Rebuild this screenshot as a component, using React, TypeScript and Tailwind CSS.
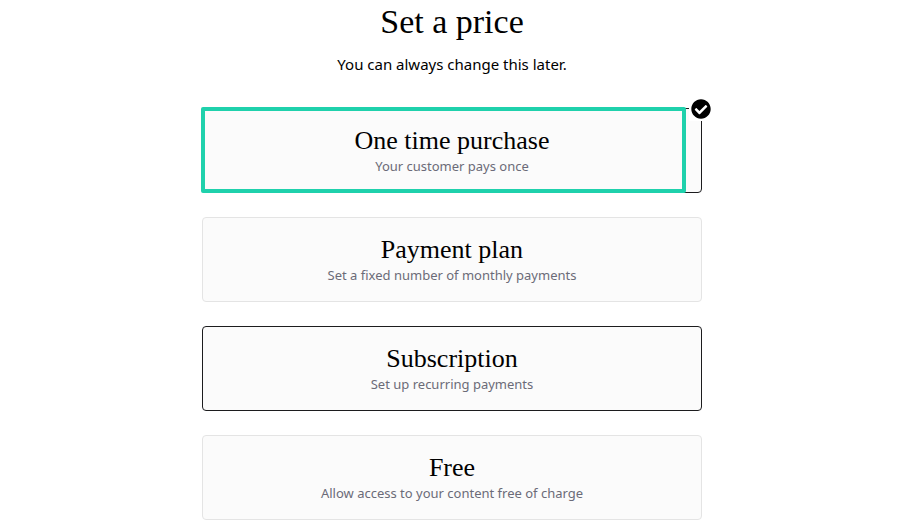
import { useState } from "react";
import { FaCheckCircle } from "react-icons/fa";

const options = [
  { id: "once", title: "One time purchase", description: "Your customer pays once" },
  { id: "plan", title: "Payment plan", description: "Set a fixed number of monthly payments" },
  { id: "subscription", title: "Subscription", description: "Set up recurring payments" },
  { id: "free", title: "Free", description: "Allow access to your content free of charge" },
];

export default function App() {
  const [selected, setSelected] = useState("once");
  const [active, setActive] = useState("subscription");

  return (
    <main className="flex flex-col items-center bg-white pr-1.5 font-['Noto_Sans',sans-serif] text-black">
      <h1 className="mt-1 font-['Liberation_Serif',serif] text-[34px] leading-9">Set a price</h1>
      <p className="mt-3 text-[15px] leading-6">You can always change this later.</p>

      <div className="mt-8 flex w-full max-w-[500px] flex-col gap-6">
        {options.map((option) => (
          <button
            key={option.id}
            type="button"
            aria-pressed={selected === option.id}
            onClick={() => {
              setSelected(option.id);
              setActive(option.id);
            }}
            className={`relative flex w-full flex-col items-center rounded border bg-[#fbfbfb] pt-[18px] pb-[15px] ${
              selected === option.id || active === option.id ? "border-[#1c1c1e]" : "border-[#e4e4e4]"
            }`}
          >
            <span className="font-['Liberation_Serif',serif] text-[26px] leading-7">{option.title}</span>
            <span className="text-[13px] leading-[22px] text-[#6b6b78]">{option.description}</span>
            {selected === option.id && (
              <>
                {/* highlight frame */}
                <span className="absolute -top-0.5 right-[15px] -bottom-px -left-0.5 rounded-xs border-4 border-[#1fd1ac]" />
                <span className="absolute -top-3 -right-3 bg-white p-0.5">
                  <FaCheckCircle className="size-5" aria-hidden="true" />
                </span>
              </>
            )}
          </button>
        ))}
      </div>
    </main>
  );
}
